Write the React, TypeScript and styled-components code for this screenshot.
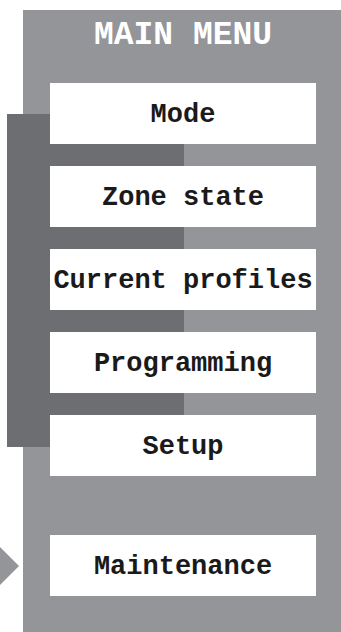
import React from "react";
import styled, { createGlobalStyle } from "styled-components";

const Global = createGlobalStyle`
  html, body { margin: 0; padding: 0; background: #ffffff; }
  body { overflow: hidden; }
  #root { width: 341px; height: 632px; }
`;

const Stage = styled.div`
  position: relative;
  width: 341px;
  height: 632px;
  overflow: hidden;
  background: #ffffff;
  font-family: "Courier New", "Liberation Mono", monospace;
`;

const Panel = styled.div`
  position: relative;
  box-sizing: border-box;
  margin: 10px 0 0 23px;
  width: 318px;
  height: 622px;
  background: #949599;
  padding: 0 25px 0 27px;
  display: flex;
  flex-direction: column;
`;

const Title = styled.h1`
  margin: 0;
  height: 50px;
  line-height: 52px;
  text-align: center;
  color: #ffffff;
  font-size: 33px;
  font-weight: bold;
  letter-spacing: 0;
  white-space: nowrap;
`;

const Menu = styled.div`
  margin-top: 23px;
  display: flex;
  flex-direction: column;
  gap: 22px;
`;

const Highlight = styled.div`
  position: absolute;
  left: -16px;
  top: 104px;
  width: 177px;
  height: 333px;
  background: #6d6e72;
  z-index: 0;
`;

const Item = styled.div<{ $gapBefore?: number }>`
  position: relative;
  z-index: 1;
  height: 61px;
  margin-top: ${(p) => (p.$gapBefore ? `${p.$gapBefore}px` : "0")};
  background: #ffffff;
  color: #1a1a1a;
  display: flex;
  align-items: center;
  justify-content: center;
  padding-top: 3px;
  box-sizing: border-box;
  font-size: 27px;
  font-weight: bold;
  white-space: nowrap;
`;

const Pointer = styled.div`
  position: absolute;
  left: 0;
  top: 547px;
  width: 19px;
  height: 38px;
  background: #949599;
  clip-path: polygon(0 0, 100% 50%, 0 100%);
`;

const items = ["Mode", "Zone state", "Current profiles", "Programming", "Setup"];

export default function App() {
  return (
    <>
      <Global />
      <Stage>
        <Panel>
          <Highlight />
          <Title>MAIN MENU</Title>
          <Menu>
            {items.map((t) => (
              <Item key={t}>{t}</Item>
            ))}
            <Item $gapBefore={37}>Maintenance</Item>
          </Menu>
        </Panel>
        <Pointer />
      </Stage>
    </>
  );
}
